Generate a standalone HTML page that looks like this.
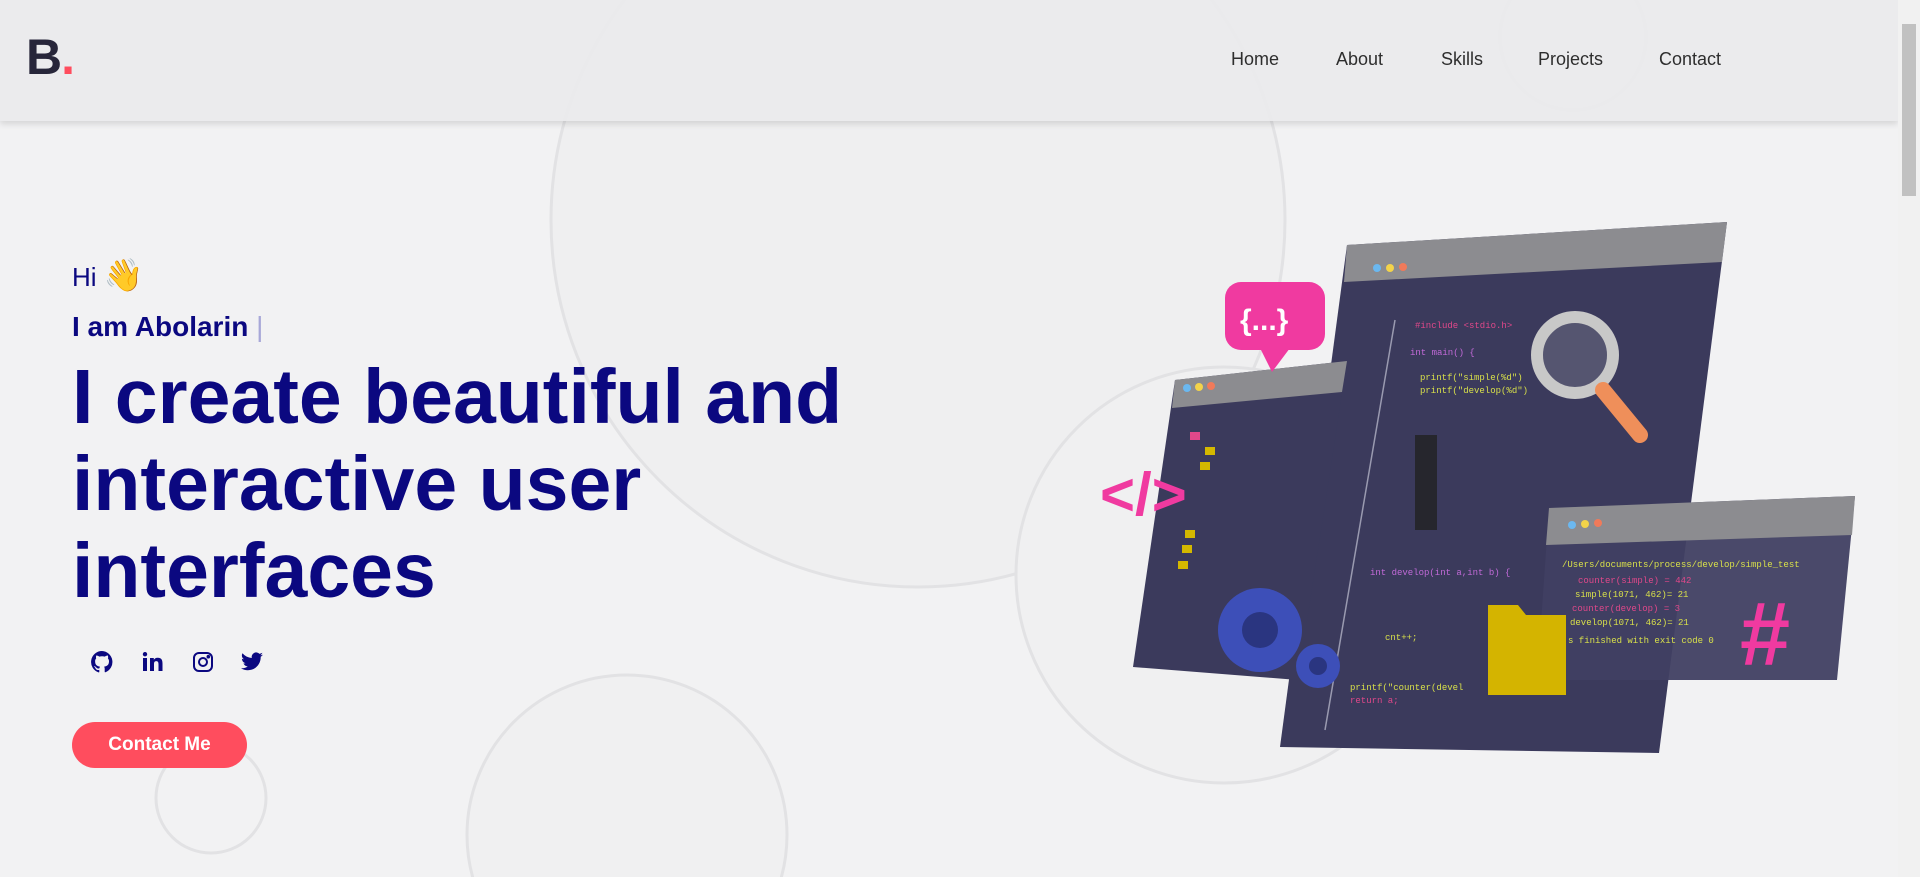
<!DOCTYPE html>
<html><head><meta charset="utf-8"><style>
*{margin:0;padding:0;box-sizing:border-box}
html,body{width:1920px;height:877px;overflow:hidden;background:#f2f2f3;font-family:"Liberation Sans",sans-serif}
.nav{position:absolute;left:0;top:0;width:1898px;height:121px;background:rgba(234,234,236,.95);box-shadow:0 3px 6px rgba(0,0,0,.12);z-index:5}
.logo{position:absolute;left:26px;top:28px;font-size:50px;font-weight:bold;color:#27263a;letter-spacing:-1px}
.logo span{color:#ff4d5e}
.links a{position:absolute;top:49px;font-size:18px;color:#2e2e2e;text-decoration:none}
.sb{position:absolute;right:0;top:0;width:22px;height:877px;background:#f1f1f1;z-index:6}
.sb div{position:absolute;left:4px;top:24px;width:14px;height:172px;background:#c1c1c1}
.t{position:absolute;left:72px;color:#0b0880;font-weight:bold;white-space:nowrap}
.btn{position:absolute;left:72px;top:722px;width:175px;height:46px;border-radius:23px;background:#ff4d5e;color:#fff;font-weight:bold;font-size:19px;text-align:center;line-height:46px}
.ic{position:absolute;top:650px}
</style></head><body>
<svg width="1920" height="877" style="position:absolute;left:0;top:0">
<g fill="none" stroke="#e2e2e4" stroke-width="3">
<circle cx="918" cy="220" r="367" fill="#efeff0"/>
<circle cx="1224" cy="575" r="208" fill="#f0f0f1"/>
<circle cx="627" cy="835" r="160" fill="#f0f0f1"/>
<circle cx="211" cy="798" r="55"/>
<circle cx="1573" cy="37" r="73"/>
</g>
<polygon points="1347,245 1727,222 1659,753 1280,747" fill="#3b3a5c"/>
<polygon points="1347,245 1727,222 1722,262 1344,282" fill="#8c8c90"/>
<circle cx="1377" cy="268" r="4" fill="#6bb8f0"/><circle cx="1390" cy="268" r="4" fill="#f3d34a"/><circle cx="1403" cy="267" r="4" fill="#f07a5a"/>
<g font-family="Liberation Mono" font-size="9" fill="#d8e04a">
<text x="1415" y="328" fill="#e0488a">#include &lt;stdio.h&gt;</text>
<text x="1410" y="355" fill="#c26ad8">int main() {</text>
<text x="1420" y="380">printf("simple(%d")</text>
<text x="1420" y="393">printf("develop(%d")</text>
<text x="1370" y="575" fill="#c26ad8">int develop(int a,int b) {</text>
<text x="1385" y="640">cnt++;</text>
<text x="1350" y="690">printf("counter(devel</text>
<text x="1350" y="703" fill="#e0488a">return a;</text>
</g>
<line x1="1395" y1="320" x2="1325" y2="730" stroke="#9a9ab0" stroke-width="1.5"/>
<circle cx="1575" cy="355" r="38" fill="#555570" stroke="#c8c8c8" stroke-width="12"/>
<line x1="1603" y1="390" x2="1640" y2="435" stroke="#ef8f5a" stroke-width="16" stroke-linecap="round"/>
<polygon points="1175,380 1347,361 1298,680 1133,667" fill="#3b3a5c"/>
<polygon points="1175,380 1347,361 1342,392 1172,408" fill="#8c8c90"/>
<circle cx="1187" cy="388" r="4" fill="#6bb8f0"/><circle cx="1199" cy="387" r="4" fill="#f3d34a"/><circle cx="1211" cy="386" r="4" fill="#f07a5a"/>
<g fill="#d4b800"><rect x="1190" y="432" width="10" height="8" fill="#e0488a"/><rect x="1205" y="447" width="10" height="8"/><rect x="1200" y="462" width="10" height="8"/><rect x="1185" y="530" width="10" height="8"/><rect x="1182" y="545" width="10" height="8"/><rect x="1178" y="561" width="10" height="8"/></g>
<rect x="1225" y="282" width="100" height="68" rx="16" fill="#f03aa0"/>
<polygon points="1260,348 1290,348 1272,372" fill="#f03aa0"/>
<text x="1240" y="330" font-size="30" font-weight="bold" fill="#fff" font-family="Liberation Sans">{...}</text>
<text x="1100" y="515" font-size="60" font-weight="bold" fill="#f03aa0" font-family="Liberation Sans">&lt;/&gt;</text>
<polygon points="1549,508 1855,496 1837,680 1537,680" fill="#403f62" opacity=".95"/>
<polygon points="1549,508 1855,496 1852,535 1546,545" fill="#8c8c90"/>
<circle cx="1572" cy="525" r="4" fill="#6bb8f0"/><circle cx="1585" cy="524" r="4" fill="#f3d34a"/><circle cx="1598" cy="523" r="4" fill="#f07a5a"/>
<g font-family="Liberation Mono" font-size="9"><text x="1562" y="567" fill="#d8e04a">/Users/documents/process/develop/simple_test</text>
<text x="1578" y="583" fill="#e0488a">counter(simple) = 442</text><text x="1575" y="597" fill="#d8e04a">simple(1071, 462)= 21</text><text x="1572" y="611" fill="#e0488a">counter(develop) = 3</text><text x="1570" y="625" fill="#d8e04a">develop(1071, 462)= 21</text><text x="1568" y="643" fill="#d8e04a">s finished with exit code 0</text></g>
<text x="1740" y="665" font-size="90" font-weight="bold" fill="#f03aa0" font-family="Liberation Sans">#</text>
<path d="M1488,605 h30 l8,10 h40 v80 h-78 z" fill="#d4b400"/>
<circle cx="1260" cy="630" r="42" fill="#3d4fb8"/><circle cx="1260" cy="630" r="18" fill="#2a3580"/>
<circle cx="1318" cy="666" r="22" fill="#3d4fb8"/><circle cx="1318" cy="666" r="9" fill="#2a3580"/>
<rect x="1415" y="435" width="22" height="95" fill="#222" opacity=".8"/>
</svg>
<div class="nav"><div class="logo">B<span>.</span></div>
<div class="links"><a style="left:1231px">Home</a><a style="left:1336px">About</a><a style="left:1441px">Skills</a><a style="left:1538px">Projects</a><a style="left:1659px">Contact</a></div></div>
<div class="sb"><div></div></div>
<div class="t" style="top:256px;font-size:26px;font-weight:normal">Hi <span style="font-size:32px">👋</span></div>
<div class="t" style="top:311px;font-size:28px">I am Abolarin <span style="color:#a8a8d8;font-weight:normal">|</span></div>
<div class="t" style="top:354px;font-size:77px;line-height:87px">I create beautiful and<br>interactive user<br>interfaces</div>
<svg class="ic" style="left:90px" width="24" height="24" viewBox="0 0 24 24"><path fill="#0b0880" d="M12 1a11 11 0 0 0-3.5 21.4c.6.1.8-.2.8-.5v-2c-3 .7-3.700-1.400-3.700-1.400-.5-1.300-1.200-1.600-1.200-1.600-1-.7.1-.7.1-.7 1.1.1 1.7 1.1 1.7 1.1 1 1.7 2.6 1.2 3.2.9.1-.7.4-1.2.7-1.5-2.4-.3-5-1.2-5-5.4 0-1.2.4-2.2 1.1-2.9-.1-.3-.5-1.4.1-2.9 0 0 .9-.3 3 1.1a10 10 0 0 1 5.5 0c2.1-1.4 3-1.1 3-1.1.6 1.5.2 2.6.1 2.9.7.8 1.1 1.7 1.1 2.9 0 4.2-2.6 5.1-5 5.4.4.3.7 1 .7 2v3c0 .3.2.6.8.5A11 11 0 0 0 12 1z"/></svg>
<svg class="ic" style="left:140px" width="24" height="24" viewBox="0 0 24 24"><path fill="#0b0880" d="M3 8h4v13H3zM5 2a2.2 2.2 0 1 1 0 4.4A2.2 2.2 0 0 1 5 2zm5 6h3.8v1.8c.6-1 1.9-2.1 3.9-2.1 4.1 0 4.8 2.6 4.8 6V21h-4v-6.4c0-1.5 0-3.5-2.2-3.5S14 12.8 14 14.5V21h-4z"/></svg>
<svg class="ic" style="left:191px" width="24" height="24" viewBox="0 0 24 24" fill="none" stroke="#0b0880" stroke-width="2"><rect x="3" y="3" width="18" height="18" rx="5"/><circle cx="12" cy="12" r="4"/><circle cx="17.3" cy="6.7" r=".8" fill="#0b0880"/></svg>
<svg class="ic" style="left:240px" width="24" height="24" viewBox="0 0 24 24"><path fill="#0b0880" d="M23 4.6a9 9 0 0 1-2.6.7 4.5 4.5 0 0 0 2-2.5 9 9 0 0 1-2.9 1.1A4.5 4.5 0 0 0 11.8 8 12.8 12.8 0 0 1 2.5 3.3a4.5 4.5 0 0 0 1.4 6 4.5 4.5 0 0 1-2-.6 4.5 4.5 0 0 0 3.6 4.5 4.5 4.5 0 0 1-2 .1 4.5 4.5 0 0 0 4.2 3.1A9 9 0 0 1 1 18.2 12.8 12.8 0 0 0 7.9 20.2c8.3 0 12.8-6.9 12.8-12.8v-.6A9 9 0 0 0 23 4.6z"/></svg>
<div class="btn">Contact Me</div>
</body></html>
